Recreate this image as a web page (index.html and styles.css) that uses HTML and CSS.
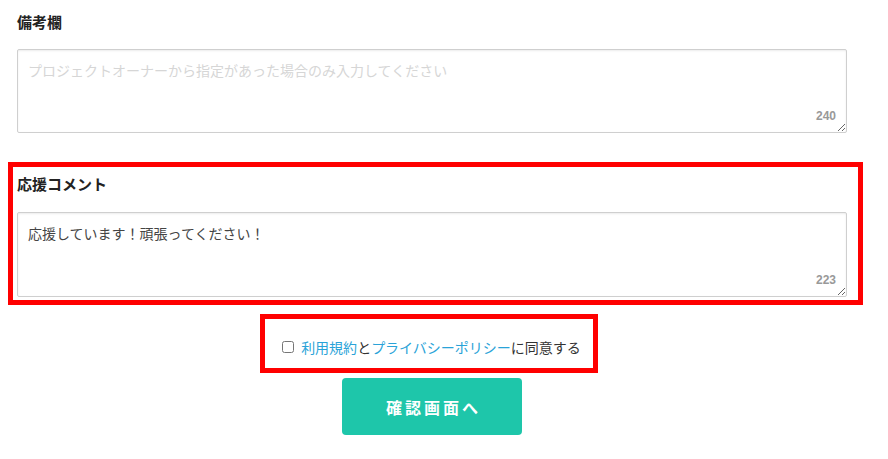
FILE: index.html
```html
<!DOCTYPE html>
<html lang="ja">
<head>
<meta charset="utf-8">
<link rel="stylesheet" href="styles.css">
</head>
<body>
<div class="page">
  <h3 class="label">備考欄</h3>
  <div class="field">
    <textarea class="area" placeholder="プロジェクトオーナーから指定があった場合のみ入力してください"></textarea>
    <span class="count">240</span>
  </div>

  <div class="mark mark-section">
    <h3 class="label">応援コメント</h3>
    <div class="field">
      <textarea class="area">応援しています！頑張ってください！</textarea>
      <span class="count">223</span>
    </div>
  </div>

  <div class="agree-row">
    <div class="mark mark-agree">
      <label class="agree"><input type="checkbox" class="check"><a class="link" href="#">利用規約</a>と<a class="link" href="#">プライバシーポリシー</a>に同意する</label>
    </div>
  </div>

  <div class="btn-row">
    <button class="submit" type="button">確認画面へ</button>
  </div>
</div>
</body>
</html>
```

FILE: styles.css
```css
* { box-sizing: border-box; }
html, body { margin: 0; padding: 0; background: #fff; }
body {
  font-family: "Noto Sans CJK JP", "Noto Sans", sans-serif;
  color: #333;
}
.page {
  width: 888px;
  padding: 12px 0 0 17px;
}
.label {
  margin: 0;
  font-size: 15px;
  line-height: 20px;
  font-weight: bold;
  color: #222;
}
.field {
  position: relative;
  width: 830px;
  margin-top: 17px;
}
.area {
  display: block;
  width: 830px;
  height: 84px;
  margin: 0;
  padding: 10px 10px;
  border: 1px solid #cfcfcf;
  border-radius: 2px;
  box-shadow: inset 0 1px 2px rgba(0,0,0,0.08);
  font-family: "Noto Sans CJK JP", "Noto Sans", sans-serif;
  font-size: 14px;
  line-height: 20px;
  color: #444;
  background: #fff;
  resize: both;
  outline: none;
}
.area::placeholder { color: #d6d6d6; }
.count {
  position: absolute;
  right: 11px;
  bottom: 11px;
  font-family: "Liberation Sans", Arial, sans-serif;
  font-weight: bold;
  font-size: 12px;
  line-height: 12px;
  color: #999;
}
.mark { border: 5px solid #f00; }
.mark-section {
  width: 855px;
  margin: 29px 0 0 -9px;
  padding: 7px 11px 3px 4px;
}
.mark-section .field { margin-top: 18px; }
.mark-section .area { height: 85px; }
.agree-row {
  width: 830px;
  display: flex;
  justify-content: center;
  margin-top: 9px;
}
.mark-agree {
  height: 59px;
  padding: 7px 12px 0 17px;
  margin-left: -6px;
  display: flex;
  align-items: center;
}
.agree {
  display: flex;
  align-items: center;
  font-size: 14px;
  line-height: 20px;
  color: #333;
  white-space: nowrap;
}
.check {
  width: 12px;
  height: 12px;
  margin: 0 7px 0 0;
}
.link { color: #2aa3d8; text-decoration: none; }
.btn-row {
  width: 830px;
  display: flex;
  justify-content: center;
  margin-top: 5px;
}
.submit {
  width: 180px;
  height: 57px;
  border: none;
  border-radius: 4px;
  background: #1ec6aa;
  color: #fff;
  font-family: "Noto Sans CJK JP", "Noto Sans", sans-serif;
  font-size: 16px;
  font-weight: bold;
  letter-spacing: 3px;
  padding: 0 0 0 3px;
  cursor: pointer;
}
```
